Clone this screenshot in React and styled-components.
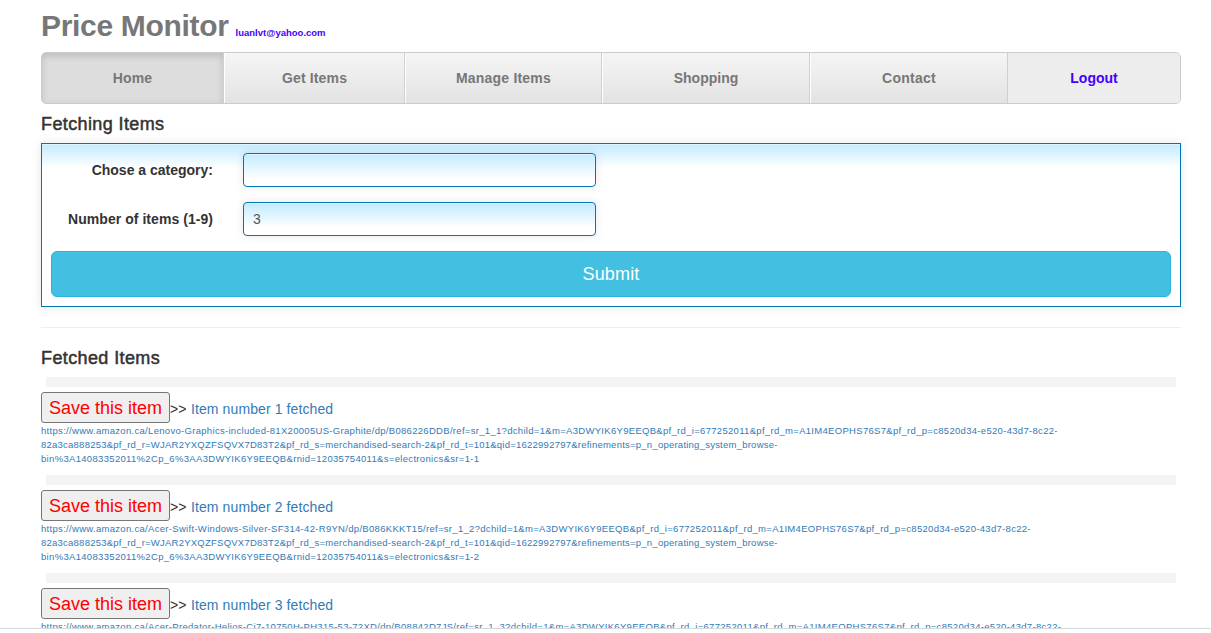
import React from 'react';
import styled, { createGlobalStyle } from 'styled-components';

const GlobalStyle = createGlobalStyle`
  *, *::before, *::after { box-sizing: border-box; }
  body {
    margin: 0;
    background: #fff;
    color: #333;
    font: 14px/20px "Liberation Sans", Arial, sans-serif;
  }
`;

const Viewport = styled.div`
  height: 629px;
  overflow: hidden;
  border-bottom: 1px solid #d6d7d9;
`;

const Container = styled.main`
  width: 1140px;
  margin-left: 41px;
`;

const Masthead = styled.header`
  display: flex;
  align-items: baseline;
  gap: 7px;
  height: 52px;
  padding-top: 8px;
`;

const Title = styled.h1`
  margin: 0;
  font-size: 30px;
  line-height: 35px;
  letter-spacing: -0.32px;
  color: #777;
`;

const Account = styled.a`
  font-size: 9.5px;
  font-weight: bold;
  color: #40f;
`;

const Nav = styled.nav`
  display: flex;
  height: 52px;
  border: 1px solid #ccc;
  border-radius: 5px;
  overflow: hidden;
  background: #eee;
`;

const NavItem = styled.a`
  flex: 0 0 ${(p) => p.$width}px;
  display: flex;
  align-items: center;
  justify-content: center;
  border-left: 1px solid #fff;
  border-right: 1px solid #d0d0d0;
  background: linear-gradient(#f5f5f5, #e3e3e3);
  font-weight: bold;
  letter-spacing: ${(p) => p.$tracking || 0}px;
  color: #777;

  &:first-child {
    border-left: 0;
    background: #ddd;
    box-shadow: inset 0 3px 7px rgba(0, 0, 0, 0.15);
  }
  &:last-child {
    border: 0;
    background: #ededed;
    color: #40f;
  }
`;

const Heading = styled.h2`
  margin: 0;
  padding-top: ${(p) => p.$top}px;
  height: ${(p) => p.$height}px;
  font-size: 18px;
  font-weight: normal;
  line-height: 20px;
  letter-spacing: 0.39px;
  -webkit-text-stroke: 0.5px #333;
`;

const Form = styled.form`
  display: flex;
  flex-direction: column;
  gap: 15px;
  height: 164px;
  padding: 9px;
  border: 1px solid #0077b3;
  background: linear-gradient(#c2ebff, #fff 24px);
  box-shadow: 0 0 10px rgba(0, 0, 0, 0.1), inset 0 1px 0 #dff5ff;
`;

const Field = styled.div`
  display: flex;
  align-items: center;
  gap: 30px;
`;

const Label = styled.label`
  width: 162px;
  text-align: right;
  font-weight: bold;
  white-space: nowrap;
  letter-spacing: ${(p) => p.$tracking || 0}px;
`;

const Input = styled.input`
  width: 353px;
  height: 34px;
  padding: 0 9px;
  border: 1px solid #0077b3;
  border-radius: 4px;
  background: linear-gradient(#c2ebff, #fff 25px);
  box-shadow: 0 0 10px rgba(0, 0, 0, 0.1), inset 0 1px 0 #dff5ff;
  color: #555;
  font: 14px "Liberation Sans", Arial, sans-serif;
`;

const Submit = styled.button`
  height: 46px;
  padding: 0;
  border: 1px solid #25b5dc;
  border-radius: 6px;
  background: #43c0e1;
  color: #fff;
  font: 18px "Liberation Sans", Arial, sans-serif;
  letter-spacing: 0.15px;
`;

const Divider = styled.hr`
  height: 1px;
  margin: 20px 0 0;
  border: 0;
  background: #eee;
`;

const Item = styled.article`
  height: 98px;
`;

const Bar = styled.div`
  height: 10px;
  margin: 0 5px 5px;
  background: #f4f4f4;
`;

const ItemHead = styled.div`
  display: flex;
  align-items: center;
  height: 31px;
`;

const SaveButton = styled.button`
  width: 129px;
  height: 31px;
  padding: 2px 0 0;
  border: 1px solid #767676;
  border-radius: 3px;
  background: #efefef;
  color: #f00;
  font: 18px "Liberation Sans", Arial, sans-serif;
`;

const Arrows = styled.span`
  width: 21px;
  padding-top: 3px;
`;

const ItemLink = styled.a`
  padding-top: 3px;
  letter-spacing: 0.1px;
  color: #337ab7;
`;

const ItemUrl = styled.a`
  display: block;
  padding-top: 1px;
  font-size: 9.5px;
  line-height: 14px;
  color: #337ab7;
  white-space: nowrap;
`;

const UrlLine = styled.span`
  display: block;
  letter-spacing: ${(p) => p.$tracking}px;
`;

const NAV = [
  ['Home', 182, 0.15],
  ['Get Items', 181, 0.15],
  ['Manage Items', 197, 0.2],
  ['Shopping', 208, 0],
  ['Contact', 198, 0.25],
  ['Logout', 172, 0],
];

const ITEMS = [
  'Lenovo-Graphics-included-81X20005US-Graphite/dp/B086226DDB',
  'Acer-Swift-Windows-Silver-SF314-42-R9YN/dp/B086KKKT15',
  'Acer-Predator-Helios-Ci7-10750H-PH315-53-72XD/dp/B08842D7JS',
];

export default function App() {
  return (
    <>
      <GlobalStyle />
      <Viewport>
        <Container>
          <Masthead>
            <Title>Price Monitor</Title>
            <Account>luanlvt@yahoo.com</Account>
          </Masthead>
          <Nav>
            {NAV.map(([name, width, tracking]) => (
              <NavItem key={name} $width={width} $tracking={tracking}>{name}</NavItem>
            ))}
          </Nav>
          <Heading $top={10} $height={39}>Fetching Items</Heading>
          <Form>
            <Field>
              <Label htmlFor="category">Chose a category:</Label>
              <Input id="category" />
            </Field>
            <Field>
              <Label htmlFor="count" $tracking={0.05}>Number of items (1-9)</Label>
              <Input id="count" defaultValue="3" />
            </Field>
            <Submit type="button">Submit</Submit>
          </Form>
          <Divider />
          <Heading $top={20} $height={49}>Fetched Items</Heading>
          {ITEMS.map((path, i) => (
            <Item key={path}>
              <Bar />
              <ItemHead>
                <SaveButton>Save this item</SaveButton>
                <Arrows>&gt;&gt;</Arrows>
                <ItemLink>Item number {i + 1} fetched</ItemLink>
              </ItemHead>
              <ItemUrl>
                <UrlLine $tracking={0.306}>{`https://www.amazon.ca/${path}/ref=sr_1_${i + 1}?dchild=1&m=A3DWYIK6Y9EEQB&pf_rd_i=677252011&pf_rd_m=A1IM4EOPHS76S7&pf_rd_p=c8520d34-e520-43d7-8c22-`}</UrlLine>
                <UrlLine $tracking={0.237}>82a3ca888253&amp;pf_rd_r=WJAR2YXQZFSQVX7D83T2&amp;pf_rd_s=merchandised-search-2&amp;pf_rd_t=101&amp;qid=1622992797&amp;refinements=p_n_operating_system_browse-</UrlLine>
                <UrlLine $tracking={0.32}>{`bin%3A14083352011%2Cp_6%3AA3DWYIK6Y9EEQB&rnid=12035754011&s=electronics&sr=1-${i + 1}`}</UrlLine>
              </ItemUrl>
            </Item>
          ))}
        </Container>
      </Viewport>
    </>
  );
}
